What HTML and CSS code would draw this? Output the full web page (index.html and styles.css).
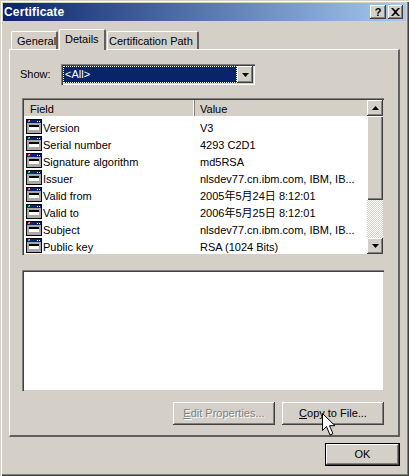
FILE: index.html
```html
<!DOCTYPE html>
<html lang="en">
<head>
<meta charset="utf-8">
<title>Certificate</title>
<link rel="stylesheet" href="styles.css">
</head>
<body>
<div class="window">
  <header class="titlebar">
    <span class="title">Certificate</span>
    <div class="caption-buttons">
      <button class="caption-btn help">?</button>
      <button class="caption-btn close"><svg width="9" height="8" viewBox="0 0 9 8"><path d="M0 0h2l2.500 2.500L7 0h2L5.500 4 9 8H7L4.500 5.500 2 8H0l3.500-4z" fill="#000"/></svg></button>
    </div>
  </header>
  <nav class="tabs">
    <div class="tab">General</div>
    <div class="tab active">Details</div>
    <div class="tab">Certification Path</div>
  </nav>
  <main class="pane">
    <div class="show-row">
      <label class="show-label">Show:</label>
      <div class="combo">
        <div class="combo-value"><span class="combo-focus">&lt;All&gt;</span></div>
        <div class="arrow-btn combo-arrow"><svg width="7" height="4" viewBox="0 0 7 4"><path d="M0 0h7L3.500 4z" fill="#000"/></svg></div>
      </div>
    </div>
    <div class="list">
      <div class="list-main">
        <div class="list-head">
          <div class="head-cell field-col">Field</div>
          <div class="head-cell value-col">Value</div>
        </div>
        <div class="list-rows">
          <div class="row"><div class="field-cell"><svg class="row-icon" width="16" height="15" viewBox="0 0 16 15"><use href="#cert-icon"/></svg><span class="cell-text">Version</span></div><div class="value-cell">V3</div></div>
          <div class="row"><div class="field-cell"><svg class="row-icon" width="16" height="15" viewBox="0 0 16 15"><use href="#cert-icon"/></svg><span class="cell-text">Serial number</span></div><div class="value-cell">4293 C2D1</div></div>
          <div class="row"><div class="field-cell"><svg class="row-icon" width="16" height="15" viewBox="0 0 16 15"><use href="#cert-icon"/></svg><span class="cell-text">Signature algorithm</span></div><div class="value-cell">md5RSA</div></div>
          <div class="row"><div class="field-cell"><svg class="row-icon" width="16" height="15" viewBox="0 0 16 15"><use href="#cert-icon"/></svg><span class="cell-text">Issuer</span></div><div class="value-cell">nlsdev77.cn.ibm.com, IBM, IB...</div></div>
          <div class="row"><div class="field-cell"><svg class="row-icon" width="16" height="15" viewBox="0 0 16 15"><use href="#cert-icon"/></svg><span class="cell-text">Valid from</span></div><div class="value-cell">2005年5月24日 8:12:01</div></div>
          <div class="row"><div class="field-cell"><svg class="row-icon" width="16" height="15" viewBox="0 0 16 15"><use href="#cert-icon"/></svg><span class="cell-text">Valid to</span></div><div class="value-cell">2006年5月25日 8:12:01</div></div>
          <div class="row"><div class="field-cell"><svg class="row-icon" width="16" height="15" viewBox="0 0 16 15"><use href="#cert-icon"/></svg><span class="cell-text">Subject</span></div><div class="value-cell">nlsdev77.cn.ibm.com, IBM, IB...</div></div>
          <div class="row"><div class="field-cell"><svg class="row-icon" width="16" height="15" viewBox="0 0 16 15"><use href="#cert-icon"/></svg><span class="cell-text">Public key</span></div><div class="value-cell">RSA (1024 Bits)</div></div>
        </div>
      </div>
      <div class="scrollbar">
        <div class="arrow-btn scroll-btn"><svg width="7" height="4" viewBox="0 0 7 4"><path d="M0 4h7L3.500 0z" fill="#000"/></svg></div>
        <div class="scroll-thumb"></div>
        <div class="scroll-track"></div>
        <div class="arrow-btn scroll-btn"><svg width="7" height="4" viewBox="0 0 7 4"><path d="M0 0h7L3.500 4z" fill="#000"/></svg></div>
      </div>
    </div>
    <div class="detail-box"></div>
    <div class="pane-actions">
      <button class="btn disabled"><u>E</u>dit Properties...</button>
      <button class="btn"><u>C</u>opy to File...</button>
    </div>
  </main>
  <footer class="footer">
    <button class="btn ok">OK</button>
  </footer>
  <svg class="cursor" width="13" height="23" viewBox="0 0 13 23"><path d="M.500.500v17l4-4 3.500 8.500 3-1.300-3.500-8h5.500z" fill="#fff" stroke="#000"/></svg>
</div>
<svg class="defs" width="0" height="0">
  <defs>
    <g id="cert-icon">
      <rect x="0" y="0" width="16" height="15" fill="#000"/>
      <rect x="1" y="1" width="14" height="3" fill="#0a246a"/>
      <rect x="2" y="1" width="1" height="1" fill="#ff3030"/>
      <rect x="3" y="1" width="1" height="1" fill="#f0e040"/>
      <rect x="2" y="2" width="1" height="1" fill="#30d0f0"/>
      <rect x="3" y="2" width="1" height="1" fill="#30c040"/>
      <rect x="11" y="2" width="1" height="1" fill="#fff"/>
      <rect x="13" y="2" width="1" height="1" fill="#fff"/>
      <rect x="1" y="4" width="14" height="10" fill="#a8a8a8"/>
      <rect x="3" y="6" width="10" height="2" fill="#000"/>
      <rect x="3" y="8" width="10" height="3" fill="#fff"/>
    </g>
  </defs>
</svg>
</body>
</html>
```
FILE: styles.css
```css
* { box-sizing: border-box; }
html, body { margin: 0; padding: 0; }
body { width: 409px; height: 476px; overflow: hidden; background: #d4d0c8; }
.defs { position: absolute; }

.window {
  position: relative;
  width: 409px;
  height: 476px;
  padding: 3px 3px 0;
  background: #d4d0c8;
  color: #000;
  font: 11px/13px "Liberation Sans", "Noto Sans CJK SC", sans-serif;
  box-shadow: inset 1px 1px 0 #d4d0c8, inset 2px 2px 0 #fff, inset -1px -1px 0 #404040, inset -2px -2px 0 #808080;
}

.titlebar {
  display: flex;
  align-items: center;
  justify-content: space-between;
  height: 18px;
  padding: 0 3px 0 1px;
  background: linear-gradient(90deg, #0a246a, #a6caf0);
}
.title { color: #fff; font: bold 12px/18px "Liberation Sans", sans-serif; letter-spacing: .15px; }
.caption-buttons { display: flex; gap: 2px; }
.caption-btn {
  display: flex;
  align-items: center;
  justify-content: center;
  width: 16px;
  height: 14px;
  padding: 0;
  border: 0;
  background: #d4d0c8;
  color: #000;
  font: bold 11px/14px "Liberation Sans", sans-serif;
  box-shadow: inset -1px -1px 0 #404040, inset 1px 1px 0 #fff, inset -2px -2px 0 #808080;
}
.caption-btn.close { width: 15px; }

.tabs {
  display: flex;
  align-items: flex-end;
  height: 28px;
  padding-left: 8px;
  position: relative;
  z-index: 1;
}
.tab {
  height: 18px;
  padding: 3px 0 0 5px;
  background: #d4d0c8;
  border-top: 1px solid #fff;
  border-left: 1px solid #fff;
  border-right: 2px solid #606060;
  border-radius: 2px 2px 0 0;
  white-space: nowrap;
}
.tab:first-child { margin-right: 1px; width: 47px; }
.tab.active {
  height: 21px;
  width: 47px;
  margin-bottom: -1px;
  padding: 3px 0 0 5px;
  position: relative;
}
.tab:last-child { width: 92px; padding-left: 1px; margin-left: 1px; }

.pane {
  display: flex;
  flex-direction: column;
  width: 391px;
  height: 388px;
  margin-left: 6px;
  padding: 14px 15px 0 12px;
  border-top: 1px solid #fff;
  border-left: 1px solid #fff;
  border-right: 2px solid #606060;
  border-bottom: 2px solid #606060;
}

.show-row { display: flex; align-items: center; height: 21px; }
.show-label { width: 41px; margin-left: -2px; }
.combo {
  display: flex;
  width: 194px;
  height: 21px;
  padding: 2px;
  background: #d4d0c8;
  box-shadow: inset 1px 1px 0 #808080, inset 2px 2px 0 #404040, inset -1px -1px 0 #fff, inset -2px -2px 0 #d4d0c8;
}
.combo-value { flex: 1; padding: 1px; background: #0a246a; }
.combo-focus {
  display: block;
  height: 15px;
  padding-left: 1px;
  color: #fff;
  line-height: 15px;
  outline: 1px dotted #fff;
}
.arrow-btn {
  display: flex;
  align-items: center;
  justify-content: center;
  background: #d4d0c8;
  box-shadow: inset -1px -1px 0 #404040, inset 1px 1px 0 #fff, inset -2px -2px 0 #808080;
}
.combo-arrow { width: 16px; }

.list {
  display: flex;
  width: 362px;
  height: 157px;
  margin-top: 13px;
  padding: 2px 1px 1px 2px;
  background: #fff;
  box-shadow: inset 1px 1px 0 #808080, inset 2px 2px 0 #404040, inset -1px -1px 0 #d4d0c8;
}
.list-main { flex: 1; min-width: 0; overflow: hidden; }
.list-head { display: flex; height: 16px; background: #d4d0c8; }
.head-cell { padding: 3px 0 0 6px; line-height: 13px; }
.field-col { width: 171px; box-shadow: inset -1px 0 0 #808080, inset -2px 0 0 #fff; }
.value-col { flex: 1; padding-left: 5px; }
.list-rows { padding-top: 2px; }
.row { display: flex; height: 17px; align-items: center; }
.field-cell { display: flex; align-items: center; gap: 1px; width: 171px; padding-left: 2px; white-space: nowrap; }
.cell-text { padding-top: 4px; }
.row-icon { flex: none; }
.value-cell { flex: 1; padding: 4px 0 0 5px; white-space: nowrap; }

.scrollbar { display: flex; flex-direction: column; width: 16px; flex: none; }
.scroll-btn { height: 16px; flex: none; }
.scroll-thumb {
  height: 84px;
  flex: none;
  background: #d4d0c8;
  box-shadow: inset 1px 1px 0 #fff, inset -1px -1px 0 #404040, inset -2px -2px 0 #808080;
}
.scroll-track {
  flex: 1;
  background: conic-gradient(#fff 25%, #d4d0c8 0 50%, #fff 0 75%, #d4d0c8 0) 0 0 / 2px 2px;
}

.detail-box {
  width: 362px;
  height: 121px;
  margin-top: 15px;
  background: #fff;
  box-shadow: inset 1px 1px 0 #808080, inset 2px 2px 0 #404040, inset -1px -1px 0 #d4d0c8;
}

.pane-actions {
  display: flex;
  justify-content: flex-end;
  gap: 7px;
  width: 362px;
  margin-top: 11px;
}
.btn {
  width: 102px;
  height: 23px;
  padding: 0;
  border: 0;
  background: #d4d0c8;
  color: #000;
  font: 11px/13px "Liberation Sans", sans-serif;
  box-shadow: inset -1px -1px 0 #404040, inset 1px 1px 0 #fff, inset -2px -2px 0 #808080;
}
.btn.disabled { color: #808080; text-shadow: 1px 1px 0 #fff; }
.footer { display: flex; justify-content: flex-end; padding: 6px 6px 0 0; }
.btn.ok {
  width: 75px;
  border: 1px solid #000;
}

.cursor { position: absolute; left: 322px; top: 413px; }
```
